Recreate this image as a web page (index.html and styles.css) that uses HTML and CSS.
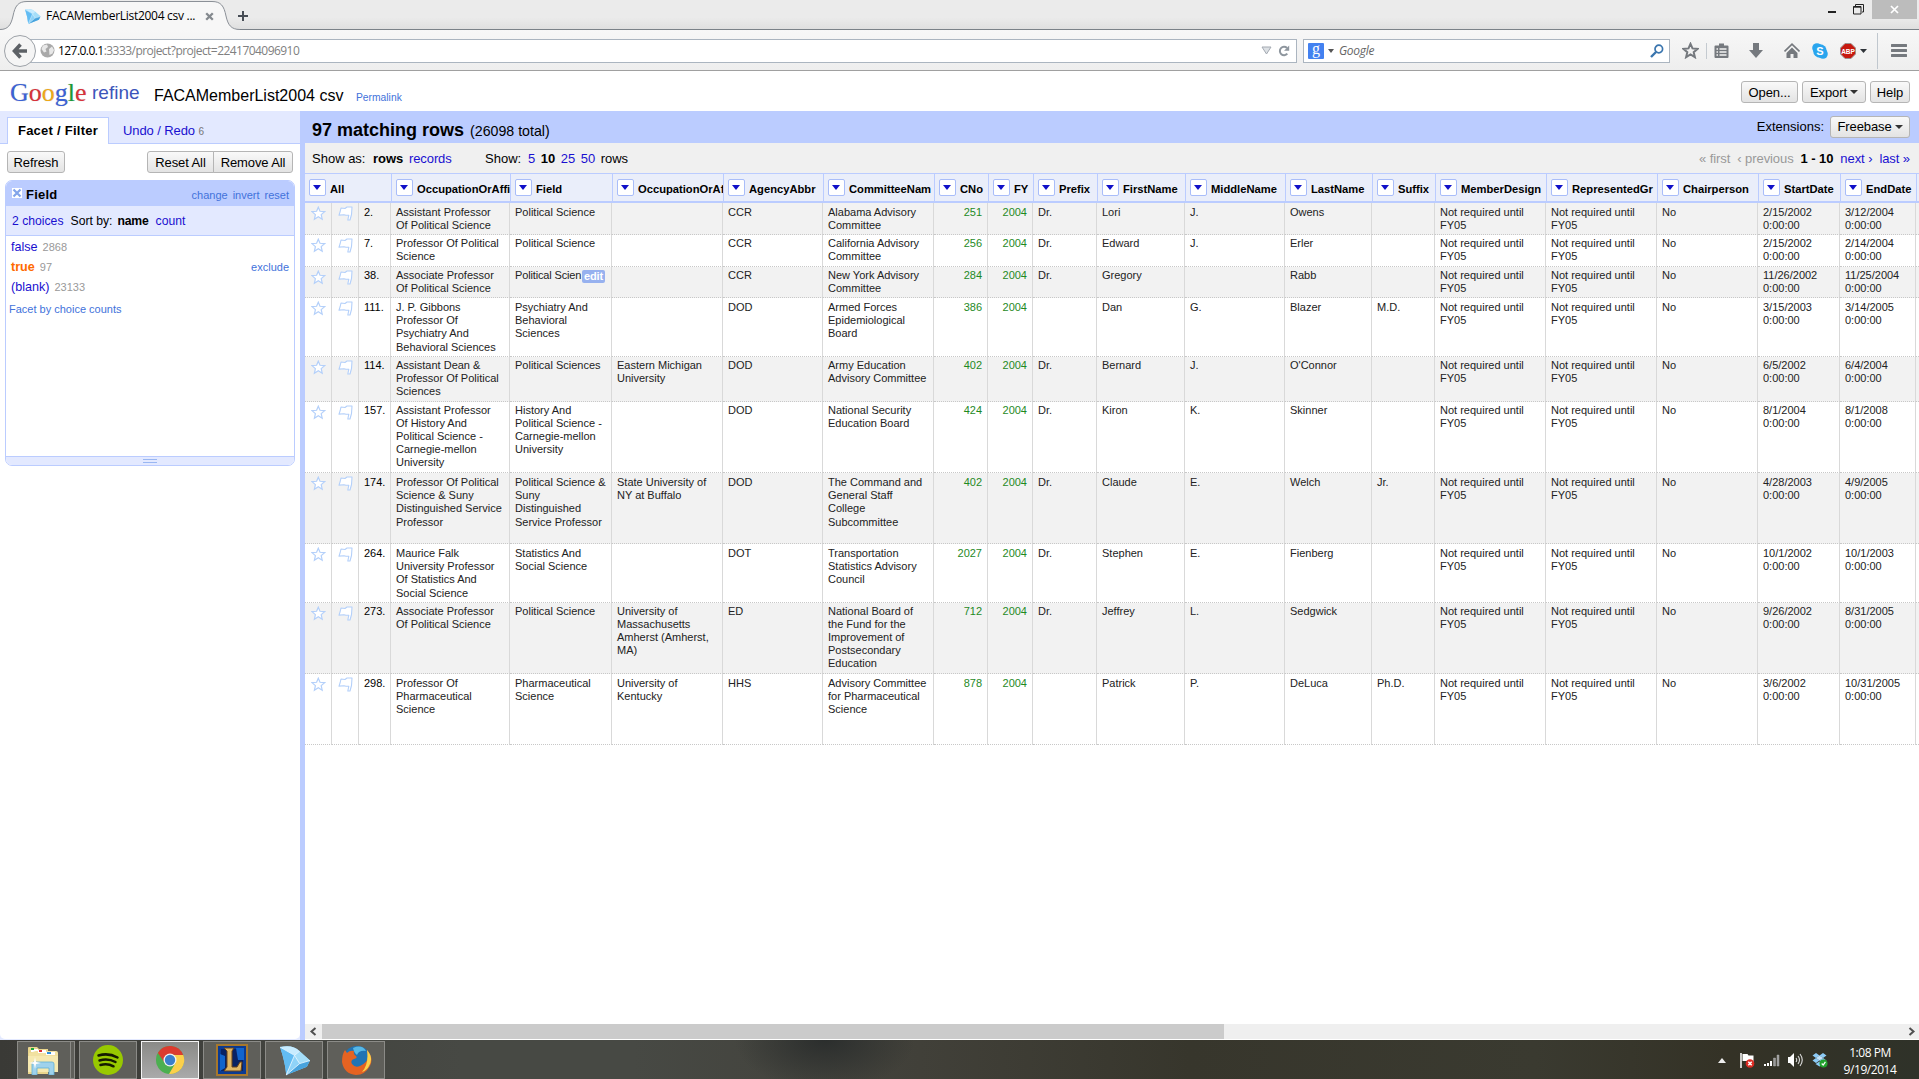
FILE: index.html
```html
<!DOCTYPE html>
<html lang="en">
<head>
<meta charset="utf-8">
<title>FACAMemberList2004 csv - Google Refine</title>
<link rel="stylesheet" href="styles.css">
</head>
<body>
<svg class="defs" width="0" height="0">
  <defs>
    <symbol id="star" viewBox="0 0 15 15"><path d="M7.3 1.2 9 5.3l4.6.3-3.4 3 1 4.6-3.9-2.4-3.9 2.4 1-4.6-3.4-3L5.6 5.3z" fill="#fff" stroke="#b4d0fa" stroke-width="1.2"/></symbol>
    <symbol id="flag" viewBox="0 0 15 15"><path d="M2.200 5.500 3 2l4 .5L9 1h5l-.5 7.500L12 14H9.800l1-4.700H8L6 8.800l-5 .3z" fill="#fff" stroke="#b4d0fa" stroke-width="1.1" stroke-linejoin="round"/></symbol>
    <symbol id="diamond" viewBox="0 0 32 30"><path d="M2 2Q14-1 21 6l10 9-3 6-20 8Q7 17 2 2z" fill="#8fd3f8"/><path d="M2 2Q14-1 21 6l-5 4z" fill="#c8ecff"/><path d="m2 2 14 8-8 19Q7 17 2 2z" fill="#62bcf3"/><path d="m21 6 10 9-10 3-5-8z" fill="#a5def9"/><path d="m8 29 13-11 10-3-3 6z" fill="#48a3dd"/><path d="m2 2 14 8 5-4m-5 4 5 8 10-3M8 29l8-19M8 29l13-11" fill="none" stroke="#eaf8ff" stroke-width=".8"/></symbol>
  </defs>
</svg>

<div class="tabstrip">
  <div class="browser-tab">
    <svg class="tab-shape" width="240" height="30" viewBox="0 0 240 30"><path d="M0 30V29.500C8 29.500 11 25 13 16C15 6 18 1.500 27 1.500H212C221 1.500 224 6 226 16C228 25 231 29.500 240 29.500V30z" fill="#f7f7f7"/><path d="M0 29.500C8 29.500 11 25 13 16C15 6 18 1.500 27 1.500H212C221 1.500 224 6 226 16C228 25 231 29.500 240 29.500" fill="none" stroke="#8b9097"/></svg>
    <svg class="tab-icon" width="17" height="17"><use href="#diamond"/></svg>
    <span class="tab-title">FACAMemberList2004 csv ...</span>
    <svg class="tab-close" width="9" height="9" viewBox="0 0 9 9"><path d="m1.200 1.200 6.600 6.600m0-6.600L1.200 7.800" stroke="#84898e" stroke-width="2.300"/></svg>
  </div>
  <svg class="new-tab" width="10" height="10" viewBox="0 0 10 10"><path d="M5 0v10M0 5h10" stroke="#474d55" stroke-width="2"/></svg>
  <div class="window-buttons">
    <svg class="win-min" width="8" height="11" viewBox="0 0 8 11"><path d="M0 10h8" stroke="#222" stroke-width="2"/></svg>
    <svg class="win-restore" width="11" height="11" viewBox="0 0 11 11"><path d="M2.500 3V.500h8v7.500H9M.500 2.500h7.500v7.500H.500z" fill="none" stroke="#222"/><path d="M0 3.200h8" stroke="#222"/></svg>
    <div class="win-close"><svg width="9" height="9" viewBox="0 0 9 9"><path d="m1 1 7 7m0-7L1 8" stroke="#fff" stroke-width="1.700"/></svg></div>
  </div>
</div>

<div class="navbar">
  <div class="url-wrap">
    <div class="back"><svg width="16" height="16" viewBox="0 0 16 16"><path d="M8.500 1.500 2.500 8l6 6.500M2.500 8H15" fill="none" stroke="#5d6166" stroke-width="3.600"/></svg></div>
    <div class="urlbar">
      <svg class="globe" width="15" height="15" viewBox="0 0 15 15"><circle cx="7.500" cy="7.500" r="7" fill="#a9a9a9"/><path d="M3 2.500 7 1.500 8 4 5.500 6 6.500 8.500 4 9.500 1.500 6zM9 6l3-2.500 2 3.500-1.500 3.500L9.500 12z" fill="#e8e8e8"/></svg>
      <span class="url"><b>127.0.0.1</b>:3333/project?project=2241704096910</span>
      <svg class="drop" width="11" height="9" viewBox="0 0 11 9"><path d="M1 1h9L5.500 8z" fill="#dde1e5" stroke="#a4aab2"/></svg>
      <svg class="reload" width="12" height="12" viewBox="0 0 12 12"><path d="M9.300 8.700A4.200 4.200 0 1 1 9 3" fill="none" stroke="#8e969e" stroke-width="2"/><path d="M11.200.500v5.200H6z" fill="#8e969e"/></svg>
    </div>
  </div>
  <div class="searchbar">
    <div class="engine">g</div>
    <svg class="engine-arrow" width="6" height="4" viewBox="0 0 6 4"><path d="M0 0h6L3 4z" fill="#555"/></svg>
    <span class="placeholder">Google</span>
    <svg width="14" height="14" viewBox="0 0 14 14"><circle cx="8.800" cy="5" r="3.800" fill="none" stroke="#3a75ae" stroke-width="1.700"/><path d="M6 8 1 13" stroke="#3a75ae" stroke-width="2.400"/></svg>
  </div>
  <div class="tools">
    <svg class="t-star" width="17" height="17" viewBox="0 0 17 17"><path d="m8.500 1.800 2 4.600 5 .5-3.800 3.300 1.200 5-4.400-2.700-4.400 2.700 1.200-5L1.500 6.900l5-.5z" fill="none" stroke="#75797e" stroke-width="2"/></svg>
    <i class="t-line"></i>
    <svg class="t-clip" width="15" height="15" viewBox="0 0 15 15"><path d="M5 2.500V.500h5v2h3.500q1 0 1 1V14q0 1-1 1h-12q-1 0-1-1V3.500q0-1 1-1z" fill="#75797e"/><path d="M2.500 6H4m1.500 0h7m-10 3H4m1.500 0h7m-10 3H4m1.500 0h7" stroke="#f3f3f3" stroke-width="1.500"/></svg>
    <svg class="t-down" width="14" height="15" viewBox="0 0 14 15"><path d="M4 0h6v7h4l-7 8-7-8h4z" fill="#75797e"/></svg>
    <svg class="t-home" width="16" height="15" viewBox="0 0 16 15"><path d="M8 4.500 13.500 10v5H9.500v-4h-3v4h-4v-5z" fill="#75797e"/><path d="m.500 8.500 7.500-7.300 7.500 7.300" fill="none" stroke="#75797e" stroke-width="1.700"/></svg>
    <svg class="t-skype" width="16" height="16" viewBox="0 0 16 16"><circle cx="5" cy="5" r="4.800" fill="#2aa5ee"/><circle cx="11" cy="11" r="4.800" fill="#2aa5ee"/><circle cx="8" cy="8" r="6.800" fill="#2aa5ee"/><text x="8" y="12" text-anchor="middle" class="skype-s">S</text></svg>
    <svg class="t-abp" width="16" height="16" viewBox="0 0 16 16"><path d="M5 .500h6L15.500 5v6L11 15.500H5L.500 11V5z" fill="#c7190f" stroke="#9c8f8d"/><text x="8" y="10.700" text-anchor="middle" class="abp-t">ABP</text></svg>
    <svg class="t-arrow" width="7" height="4" viewBox="0 0 7 4"><path d="M0 0h7L3.500 4z" fill="#2e3338"/></svg>
    <i class="t-div"></i>
    <svg class="t-menu" width="16" height="13" viewBox="0 0 16 13"><path d="M1 1.500h14M1 6.500h14M1 11.500h14" stroke="#75797e" stroke-width="3" stroke-linecap="round"/></svg>
  </div>
</div>

<header class="app-header">
  <div class="logo"><span class="goog"><i class="gb">G</i><i class="gr">o</i><i class="gy">o</i><i class="gb">g</i><i class="gg">l</i><i class="gr">e</i></span><span class="refine">refine</span></div>
  <span class="project">FACAMemberList2004 csv</span>
  <a class="permalink">Permalink</a>
  <div class="app-actions"><span class="button open">Open...</span><span class="button export">Export<i class="caret"></i></span><span class="button help">Help</span></div>
</header>

<main class="body">
  <aside class="left">
    <div class="left-tabs"><span class="ltab active">Facet / Filter</span><a class="ltab-link">Undo / Redo <small>6</small></a></div>
    <div class="left-body">
      <div class="facet-buttons"><span class="button refresh">Refresh</span><span class="button reset-all">Reset All</span><span class="button remove-all">Remove All</span></div>
      <section class="facet">
        <div class="facet-title"><svg width="10" height="10" viewBox="0 0 10 10"><path d="M0 0h10v10H0z" fill="#fff"/><path d="m1.500 1.500 7 7m0-7-7 7" stroke="#82a4ea" stroke-width="2.200"/></svg><b>Field</b><a>change</a><a>invert</a><a>reset</a></div>
        <div class="facet-controls"><a>2 choices</a><span>Sort by:</span><b>name</b><a>count</a></div>
        <div class="facet-list">
          <div class="choice"><a>false</a><em>2868</em></div>
          <div class="choice"><b>true</b><em>97</em><a class="exclude">exclude</a></div>
          <div class="choice"><a>(blank)</a><em>23133</em></div>
          <a class="by-count">Facet by choice counts</a>
        </div>
        <div class="facet-grip"><i></i></div>
      </section>
    </div>
  </aside>

  <section class="right">
    <div class="summary"><b>97 matching rows</b><span class="total">(26098 total)</span><span class="ext">Extensions:</span><span class="button freebase">Freebase<i class="caret"></i></span></div>
    <div class="view">
      <span class="v-as">Show as:</span><b class="v-rows">rows</b><a class="v-rec">records</a><span class="v-show">Show:</span><a class="v-n">5</a><b class="v-n">10</b><a class="v-n">25</a><a class="v-n">50</a><span>rows</span>
      <div class="pager"><span class="off">« first</span><span class="off">‹ previous</span><b>1 - 10</b><a>next ›</a><a>last »</a></div>
    </div>
    <table class="head">
      <colgroup><col class="cAll"><col class="c4"><col class="c5"><col class="c6"><col class="c7"><col class="c8"><col class="c9"><col class="c10"><col class="c11"><col class="c12"><col class="c13"><col class="c14"><col class="c15"><col class="c16"><col class="c17"><col class="c18"><col class="c19"><col class="c20"><col class="c21"></colgroup>
      <tr>
        <th><i class="menu"></i>All<th><i class="menu"></i>OccupationOrAffi<th><i class="menu"></i>Field<th><i class="menu"></i>OccupationOrAf<th><i class="menu"></i>AgencyAbbr<th><i class="menu"></i>CommitteeNam<th><i class="menu"></i>CNo<th><i class="menu"></i>FY<th><i class="menu"></i>Prefix<th><i class="menu"></i>FirstName<th><i class="menu"></i>MiddleName<th><i class="menu"></i>LastName<th><i class="menu"></i>Suffix<th><i class="menu"></i>MemberDesign<th><i class="menu"></i>RepresentedGr<th><i class="menu"></i>Chairperson<th><i class="menu"></i>StartDate<th><i class="menu"></i>EndDate<th>
    </table>
    <table class="data">
      <colgroup><col class="c1"><col class="c2"><col class="c3"><col class="c4"><col class="c5"><col class="c6"><col class="c7"><col class="c8"><col class="c9"><col class="c10"><col class="c11"><col class="c12"><col class="c13"><col class="c14"><col class="c15"><col class="c16"><col class="c17"><col class="c18"><col class="c19"><col class="c20"><col class="c21"></colgroup>
      <tr class="odd h32 low"><td><svg><use href="#star"/></svg><td><svg><use href="#flag"/></svg><td class="idx">2.<td>Assistant Professor<br>Of Political Science<td>Political Science<td><td>CCR<td>Alabama Advisory<br>Committee<td class="num">251<td class="num">2004<td>Dr.<td>Lori<td>J.<td>Owens<td><td>Not required until<br>FY05<td>Not required until<br>FY05<td>No<td>2/15/2002<br>0:00:00<td>3/12/2004<br>0:00:00<td>
      <tr class="h32"><td><svg><use href="#star"/></svg><td><svg><use href="#flag"/></svg><td class="idx">7.<td>Professor Of Political<br>Science<td>Political Science<td><td>CCR<td>California Advisory<br>Committee<td class="num">256<td class="num">2004<td>Dr.<td>Edward<td>J.<td>Erler<td><td>Not required until<br>FY05<td>Not required until<br>FY05<td>No<td>2/15/2002<br>0:00:00<td>2/14/2004<br>0:00:00<td>
      <tr class="odd h31"><td><svg><use href="#star"/></svg><td><svg><use href="#flag"/></svg><td class="idx">38.<td>Associate Professor<br>Of Political Science<td><div class="editing">Political Scien<a class="edit">edit</a></div><td><td>CCR<td>New York Advisory<br>Committee<td class="num">284<td class="num">2004<td>Dr.<td>Gregory<td><td>Rabb<td><td>Not required until<br>FY05<td>Not required until<br>FY05<td>No<td>11/26/2002<br>0:00:00<td>11/25/2004<br>0:00:00<td>
      <tr class="h59 low"><td><svg><use href="#star"/></svg><td><svg><use href="#flag"/></svg><td class="idx">111.<td>J. P. Gibbons<br>Professor Of<br>Psychiatry And<br>Behavioral Sciences<td>Psychiatry And<br>Behavioral<br>Sciences<td><td>DOD<td>Armed Forces<br>Epidemiological<br>Board<td class="num">386<td class="num">2004<td><td>Dan<td>G.<td>Blazer<td>M.D.<td>Not required until<br>FY05<td>Not required until<br>FY05<td>No<td>3/15/2003<br>0:00:00<td>3/14/2005<br>0:00:00<td>
      <tr class="odd h45"><td><svg><use href="#star"/></svg><td><svg><use href="#flag"/></svg><td class="idx">114.<td>Assistant Dean &amp;<br>Professor Of Political<br>Sciences<td>Political Sciences<td>Eastern Michigan<br>University<td>DOD<td>Army Education<br>Advisory Committee<td class="num">402<td class="num">2004<td>Dr.<td>Bernard<td>J.<td>O'Connor<td><td>Not required until<br>FY05<td>Not required until<br>FY05<td>No<td>6/5/2002<br>0:00:00<td>6/4/2004<br>0:00:00<td>
      <tr class="h71"><td><svg><use href="#star"/></svg><td><svg><use href="#flag"/></svg><td class="idx">157.<td>Assistant Professor<br>Of History And<br>Political Science -<br>Carnegie-mellon<br>University<td>History And<br>Political Science -<br>Carnegie-mellon<br>University<td><td>DOD<td>National Security<br>Education Board<td class="num">424<td class="num">2004<td>Dr.<td>Kiron<td>K.<td>Skinner<td><td>Not required until<br>FY05<td>Not required until<br>FY05<td>No<td>8/1/2004<br>0:00:00<td>8/1/2008<br>0:00:00<td>
      <tr class="odd h71 low"><td><svg><use href="#star"/></svg><td><svg><use href="#flag"/></svg><td class="idx">174.<td>Professor Of Political<br>Science &amp; Suny<br>Distinguished Service<br>Professor<td>Political Science &amp;<br>Suny<br>Distinguished<br>Service Professor<td>State University of<br>NY at Buffalo<td>DOD<td>The Command and<br>General Staff<br>College<br>Subcommittee<td class="num">402<td class="num">2004<td>Dr.<td>Claude<td>E.<td>Welch<td>Jr.<td>Not required until<br>FY05<td>Not required until<br>FY05<td>No<td>4/28/2003<br>0:00:00<td>4/9/2005<br>0:00:00<td>
      <tr class="h59 low"><td><svg><use href="#star"/></svg><td><svg><use href="#flag"/></svg><td class="idx">264.<td>Maurice Falk<br>University Professor<br>Of Statistics And<br>Social Science<td>Statistics And<br>Social Science<td><td>DOT<td>Transportation<br>Statistics Advisory<br>Council<td class="num">2027<td class="num">2004<td>Dr.<td>Stephen<td>E.<td>Fienberg<td><td>Not required until<br>FY05<td>Not required until<br>FY05<td>No<td>10/1/2002<br>0:00:00<td>10/1/2003<br>0:00:00<td>
      <tr class="odd h71"><td><svg><use href="#star"/></svg><td><svg><use href="#flag"/></svg><td class="idx">273.<td>Associate Professor<br>Of Political Science<td>Political Science<td>University of<br>Massachusetts<br>Amherst (Amherst,<br>MA)<td>ED<td>National Board of<br>the Fund for the<br>Improvement of<br>Postsecondary<br>Education<td class="num">712<td class="num">2004<td>Dr.<td>Jeffrey<td>L.<td>Sedgwick<td><td>Not required until<br>FY05<td>Not required until<br>FY05<td>No<td>9/26/2002<br>0:00:00<td>8/31/2005<br>0:00:00<td>
      <tr class="h71 low"><td><svg><use href="#star"/></svg><td><svg><use href="#flag"/></svg><td class="idx">298.<td>Professor Of<br>Pharmaceutical<br>Science<td>Pharmaceutical<br>Science<td>University of<br>Kentucky<td>HHS<td>Advisory Committee<br>for Pharmaceutical<br>Science<td class="num">878<td class="num">2004<td><td>Patrick<td>P.<td>DeLuca<td>Ph.D.<td>Not required until<br>FY05<td>Not required until<br>FY05<td>No<td>3/6/2002<br>0:00:00<td>10/31/2005<br>0:00:00<td>
    </table>
    <div class="hscroll">
      <svg width="17" height="15" viewBox="0 0 17 15"><path d="m10.500 4-4 3.500 4 3.500" fill="none" stroke="#505050" stroke-width="2"/></svg>
      <i class="thumb"></i>
      <svg class="sc-right" width="17" height="15" viewBox="0 0 17 15"><path d="m7.500 4 4 3.500-4 3.500" fill="none" stroke="#505050" stroke-width="2"/></svg>
    </div>
  </section>
</main>

<footer class="taskbar">
  <div class="task first"><svg width="34" height="30" viewBox="0 0 34 30"><path d="M2 3q0-1 1-1h8l2 2h9v25H2z" fill="#e9d58c"/><path d="M5 4h7v3H5z" fill="#fff"/><path d="M5 3h3v2H5z" fill="#1fa83a"/><path d="M10 6h20q2 0 2 2v19H3V8z" fill="#f1e1a0"/><path d="M12 5h8v3h-8z" fill="#fff"/><path d="M13 5h3v2h-3z" fill="#d33"/><path d="M20 7h9v3h-9z" fill="#fff"/><path d="M21 7h4v2h-4z" fill="#2b8fdc"/><path d="M2 11h30v16H2z" fill="#f6e9b0"/><path d="M6 30V19q0-2 2-2h18q2 0 2 2v11h-5v-7H11v7z" fill="#9fd2ec" stroke="#5faed6" stroke-width=".8"/><path d="m9 12 1 5 5 1-5 1-1 5-1-5-5-1 5-1z" fill="#fff"/></svg></div><i class="stack"></i>
  <div class="task"><svg width="30" height="30" viewBox="0 0 30 30"><circle cx="15" cy="15" r="15" fill="#98c900"/><path d="M5.500 10.500q10-3 19 2M6.500 15.500q8.500-2.500 16 1.500M7.500 20q7-2 13 1.300" fill="none" stroke="#151b00" stroke-width="2.500" stroke-linecap="round"/></svg></div>
  <div class="task current"><svg width="30" height="30" viewBox="0 0 30 30"><circle cx="15" cy="15" r="14" fill="#4caf50"/><path d="M2.900 8A14 14 0 0 1 28.300 10.500L15 9.500l-5.500 8z" fill="#dc3b2f"/><path d="M28.300 10A14 14 0 0 1 14 29l6.500-11L17 10z" fill="#fcd04b"/><circle cx="15" cy="15" r="6.500" fill="#f2f2f2"/><circle cx="15" cy="15" r="5.200" fill="#3b7fcb"/></svg></div>
  <div class="task"><svg width="32" height="32" viewBox="0 0 32 32"><path d="M1 1h30v30H1z" fill="#0b3a92" stroke="#a7782c" stroke-width="2"/><path d="M5 5h22v22H5z" fill="#0a2263"/><path d="M20 4h8v12h-6zM4 10l5 2v12l-5 3z" fill="#1264cc"/><path d="M8 4h10l-2 3v16h5l3-5h2l-1 9H8l3-4V7z" fill="#e2b765" stroke="#69431a"/></svg></div>
  <div class="task"><svg width="33" height="31"><use href="#diamond"/></svg></div>
  <div class="task"><svg width="31" height="31" viewBox="0 0 31 31"><circle cx="16" cy="15" r="14" fill="#2174b4"/><path d="M12 3q9-4 13 3-7-1-9 4-3-2-4-7z" fill="#57b8e6"/><path d="M26 5q7 8 3 16-5 9-14 9-12-1-14-13Q1 9 4 5l2 3q3-3 7-2-1 3 2 5 2 2-2 3-4 1-2 5 3 4 8 2 7-3 8-9 0-4-1-7z" fill="#e56322"/><path d="M26 5q7 8 2 16-2 4-7 6 7-8 5-22z" fill="#fcd24a"/></svg></div>
  <div class="tray">
    <svg class="up" width="8" height="5" viewBox="0 0 8 5"><path d="M0 5h8L4 0z" fill="#eee"/></svg>
    <svg class="tflag" width="15" height="15" viewBox="0 0 15 15"><path d="M1 0v15" stroke="#fff" stroke-width="1.500"/><path d="M2.500 1h5l1 1.500h5V9h-5l-1-1h-5z" fill="#fff"/><circle cx="10" cy="10.500" r="4.300" fill="#dc2b23"/><path d="m8.300 8.800 3.400 3.400m0-3.400-3.400 3.400" stroke="#fff" stroke-width="1.500"/></svg>
    <svg class="signal" width="16" height="13" viewBox="0 0 16 13"><path d="M0 10h2v2H0zm3-1h2v3H3zm3-2h2v5H6z" fill="#fff"/><path d="M9.500 4h2v8h-2zm3.500-3h2v11h-2z" fill="#999" stroke="#bbb" stroke-width=".4"/></svg>
    <svg class="sound" width="16" height="14" viewBox="0 0 16 14"><path d="M1 4h2l4-4v14l-4-4H1z" fill="#fff"/><path d="M9 5q1.500 2 0 4m2-6q3 4 0 8m2-10q4.500 6 0 12" fill="none" stroke="#ddd" stroke-width="1.100"/></svg>
    <svg class="box" width="16" height="15" viewBox="0 0 16 15"><path d="M4 0l3.500 2.500L4 5 .500 2.500zm7 0 3.500 2.500L11 5 7.500 2.500zM4 5l3.500 2.500L4 10 .500 7.500zm7 0 3.500 2.500L11 10 7.500 7.500zM3.500 11l4-2.500 4 2.500-4 2.500z" fill="#8ccbf7"/><path d="M4 0l3.500 2.500L11 5 7.500 7.500 4 5 7.500 2.500z" fill="#c4e6ff"/><circle cx="11.500" cy="10.500" r="4" fill="#22a32d"/><path d="m9.700 10.500 1.500 1.600 2.200-3.300" fill="none" stroke="#fff" stroke-width="1.200"/></svg>
    <div class="clock">1:08 PM<br>9/19/2014</div>
  </div>
</footer>
</body>
</html>
```
FILE: styles.css
```css
* { box-sizing: border-box; }
html, body { margin: 0; height: 100%; overflow: hidden; }
body { display: flex; flex-direction: column; background: #fff; color: #000; font: 13px/16px "Liberation Sans", Arial, sans-serif; white-space: nowrap; }
i, em { font-style: normal; }
svg { display: block; flex: none; }
.defs { position: absolute; }
a { color: #1a10d0; }

/* Browser chrome */
.tabstrip { flex: none; height: 30px; display: flex; align-items: flex-start; background: linear-gradient(#ebebeb 60%, #dfdfdf); border-bottom: 1px solid #7a8188; }
.browser-tab { position: relative; width: 240px; height: 30px; display: flex; align-items: center; padding: 2px 0 0 24px; }
.tab-shape { position: absolute; left: 0; top: 0; }
.tab-icon { position: relative; }
.tab-title { position: relative; width: 154px; margin-left: 5px; font: 12px/16px "Open Sans", sans-serif; letter-spacing: -.28px; }
.tab-close { position: relative; margin-left: 5px; }
.new-tab { margin: 11px 0 0 -2px; }
.window-buttons { margin-left: auto; display: flex; padding-right: 2px; }
.win-min { margin: 2px 17px 0 0; }
.win-restore { margin: 4px 8px 0 0; }
.win-close { width: 45px; height: 19px; background: #bcbcbc; display: flex; align-items: center; justify-content: center; }
.navbar { flex: none; height: 41px; display: flex; align-items: center; padding-top: 1px; background: linear-gradient(#f7f7f7, #eee); border-bottom: 1px solid #a0a0a0; font: 12px/16px "Open Sans", sans-serif; }
.url-wrap { display: flex; align-items: center; width: 1297px; padding-left: 4px; }
.back { z-index: 1; width: 32px; height: 32px; border: 1px solid #9da2a8; border-radius: 50%; background: #f5f5f5; display: flex; align-items: center; justify-content: center; }
.urlbar { flex: 1; height: 24px; margin-left: -6px; padding: 0 6px 0 9px; display: flex; align-items: center; background: #fff; border: 1px solid #abb5c0; }
.url { flex: 1; margin-left: 3px; color: #808080; letter-spacing: -.55px; }
.url b { font-weight: normal; color: #000; }
.drop { margin-right: 6px; }
.searchbar { width: 367px; height: 24px; margin-left: 6px; padding: 0 5px 0 4px; display: flex; align-items: center; background: #fff; border: 1px solid #abb5c0; }
.engine { width: 16px; height: 16px; border-radius: 1px; background: #4381f0; color: #fff; font: 16px/12px "Liberation Serif", serif; text-align: center; }
.engine-arrow { margin-left: 4px; }
.placeholder { flex: 1; margin-left: 5px; font-style: italic; color: #666; letter-spacing: -.3px; }
.tools { display: flex; align-items: center; }
.t-star { margin-left: 12px; }
.t-line { width: 1px; height: 16px; margin-left: 7px; background: #c4cad0; }
.t-clip { margin-left: 7px; }
.t-down { margin-left: 20px; }
.t-home { margin-left: 21px; }
.t-skype { margin-left: 12px; }
.t-abp { margin-left: 12px; }
.t-arrow { margin-left: 4px; }
.t-div { width: 1px; height: 36px; margin-left: 10px; background: #c0c7ce; }
.t-menu { margin-left: 13px; }
.skype-s { font: bold 11px "Liberation Sans", sans-serif; fill: #fff; }
.abp-t { font: bold 6.500px "Liberation Sans", sans-serif; fill: #fff; }

/* Application header */
.app-header { flex: none; height: 40px; display: flex; padding-left: 10px; }
.logo { width: 144px; display: flex; }
.goog { font: 26px/30px "Liberation Serif", serif; margin-top: 7px; width: 82px; text-shadow: 0 0 1px #bbb; }
.gb { color: #3b62d6; } .gr { color: #d8323a; } .gy { color: #f0a818; } .gg { color: #199a39; }
.refine { font-size: 19px; line-height: 22px; margin-top: 11px; color: #3c55ba; }
.project { width: 202px; font-size: 16px; line-height: 20px; margin-top: 15px; }
.permalink { font-size: 10.300px; margin-top: 18.500px; color: #4272db; }
.app-actions { margin: 10px 9px 0 auto; display: flex; gap: 4px; }
.button { height: 22px; border: 1px solid #b5b5b5; border-radius: 3px; background: linear-gradient(#f9f9f9, #e3e3e3); line-height: 21px; display: flex; align-items: center; justify-content: center; letter-spacing: -.1px; }
.open { width: 57px; } .export { width: 64px; } .help { width: 40px; } .freebase { width: 80px; }
.caret { margin-left: 3px; border: 4px solid transparent; border-top-color: #333; border-bottom: 0; }

/* Facet panel */
.body { flex: none; height: 969px; display: flex; height: 929px; }
.left { width: 305px; border-right: 5px solid #bbccff; background: #e3e9ff; }
.left-tabs { height: 33px; display: flex; padding: 6px 0 0 7px; border-bottom: 1px solid #bbccff; }
.ltab { width: 102px; height: 27px; border: 1px solid #bbccff; border-bottom: 0; background: #fff; font-weight: bold; text-align: center; line-height: 26px; letter-spacing: .25px; }
.ltab-link { margin-left: 14px; line-height: 27px; letter-spacing: -.1px; }
.ltab-link small { font-size: 10px; color: #777; }
.left-body { height: 895px; background: #fff; border-radius: 0 0 5px 5px; padding: 7px 5px 0; }
.facet-buttons { display: flex; padding: 0 2px; }
.refresh { width: 58px; }
.reset-all { width: 67px; margin-left: auto; border-radius: 3px 0 0 3px; }
.remove-all { width: 80px; margin-left: -1px; border-radius: 0 3px 3px 0; }
.facet { margin-top: 7px; height: 286px; border: 1px solid #bbccff; border-radius: 7px; overflow: hidden; display: flex; flex-direction: column; }
.facet-title { height: 25px; display: flex; align-items: center; padding: 3px 5px 0 6px; background: #bbccff; }
.facet-title svg { margin-top: -5px; }
.facet-title b { margin: 0 auto 0 4px; letter-spacing: .2px; }
.facet-title a { margin-left: 5px; font-size: 11px; color: #4272db; }
.facet-controls { height: 30px; display: flex; align-items: center; gap: 7px; padding-left: 6px; background: #e3e9ff; border-bottom: 1px solid #bbccff; font-size: 12.200px; }
.facet-controls b { margin-left: -2px; letter-spacing: -.2px; }
.facet-list { flex: 1; padding-top: 1px; }
.choice { height: 20px; display: flex; align-items: center; padding: 0 5px; font-size: 12.600px; }
.choice b { color: #ff6a00; }
.choice em { margin-left: 5px; font-size: 11px; color: #999; }
.exclude { margin-left: auto; }
.exclude, .by-count { font-size: 11px; color: #4272db; }
.by-count { display: block; margin: 4px 0 0 3px; }
.facet-grip { height: 9px; background: #e3e9ff; border-top: 1px solid #bbccff; padding-top: 2px; }
.facet-grip i { display: block; width: 14px; height: 4px; margin: auto; border: solid #9ab7f2; border-width: 1px 0; }

/* Grid pane */
.right { width: 1614px; display: flex; flex-direction: column; overflow: hidden; }
.summary { flex: none; height: 32px; display: flex; align-items: center; padding: 0 9px 0 7px; background: #bbccff; }
.summary b { font-size: 18px; line-height: 22px; margin-top: 5px; }
.total { margin: 8px auto 0 6px; font-size: 14.200px; }
.ext { margin-right: 6px; }
.freebase { margin-top: -1px; }
.view { flex: none; height: 30px; display: flex; align-items: center; padding: 1px 9px 0 7px; background: #f0f0f0; }
.v-as { width: 61px; } .v-rows { width: 36px; } .v-rec { width: 76px; letter-spacing: -.1px; } .v-show { width: 43px; } .v-n { margin-right: 5.500px; }
.pager { margin-left: auto; display: flex; gap: 7px; letter-spacing: -.08px; }
.off { color: #999; }

table { table-layout: fixed; border-collapse: separate; border-spacing: 0; width: 1614px; flex: none; }
.head { width: 1615px; }
.cAll { width: 87px; } .c1, .c2 { width: 27px; } .c3 { width: 32px; } .c4 { width: 119px; } .c5 { width: 102px; }
.c6 { width: 111px; } .c7 { width: 100px; } .c8 { width: 111px; } .c9 { width: 54px; } .c10 { width: 45px; }
.c11 { width: 64px; } .c12 { width: 88px; } .c13 { width: 100px; } .c14 { width: 87px; } .c15 { width: 63px; }
.c16, .c17 { width: 111px; } .c18 { width: 101px; } .c19 { width: 82px; } .c20 { width: 76px; } .c21 { width: 3px; }
th { height: 30px; padding: 4px 0 0 4px; overflow: hidden; text-align: left; vertical-align: top; font-size: 11.200px; line-height: 23px; background: #eaeefa; border: solid #bbccff; border-width: 1px 1px 2px 0; }
th:last-child, td:last-child { padding: 0; border-right: 0; }
.menu { float: left; width: 17px; height: 17px; margin: 1px 4px 0 0; border: 1px solid #a9bdf9; border-radius: 2px; background: #fff; padding: 5px 0 0 3px; }
.menu::before { content: ""; display: block; width: 0; border: 4.500px solid transparent; border-top: 5px solid #1010c8; border-bottom: 0; }
td { height: 32px; padding: 1.500px 0 0 5px; vertical-align: top; font-size: 11px; line-height: 13.200px; color: #222; border-right: 1px solid #d9d9d9; border-bottom: 1px dotted #c8c8c8; }
.odd td { background: #f2f2f2; }
.low td { padding-top: 2.900px; }
.h31 td { height: 31px; } .h45 td { height: 45px; } .h59 td { height: 59px; } .h71 td { height: 71px; }
td svg { width: 15px; height: 15px; margin: 1px 0 0 1px; }
.low svg { margin-top: 0; }
td.idx { color: #000; }
td.num { text-align: right; padding-right: 5px; color: #1f8a1f; }
.editing { position: relative; letter-spacing: -.15px; }
.edit { position: absolute; right: 6px; top: 1px; width: 23px; height: 13px; border-radius: 2px; background: #97b1ef; color: #fff; font-weight: bold; text-align: center; }
.hscroll { flex: none; height: 15px; margin: auto 0 1px; display: flex; background: #efefef; }
.thumb { width: 902px; background: #cbcbcb; }
.sc-right { margin-left: auto; }

/* Taskbar */
.taskbar { flex: 1; display: flex; align-items: stretch; padding: 1px 0 0 17px; background: radial-gradient(ellipse 90px 50px at 825px 0, #2b2e2d, transparent), linear-gradient(90deg, #3a3a36, #474944 24%, #474944 33%, #414039 48%, #37362c 62%, #3a3a30 80%, #343226 90%, #2f3229); }
.task { width: 58px; margin-right: 4px; display: flex; align-items: center; justify-content: center; background: #5f5f5a; border: 1px solid #8b8b87; }
.first { width: 54px; margin: 0; padding-right: 2px; }
.stack { width: 4px; margin-right: 4px; background: #5f5f5a; border: 1px solid #8b8b87; border-left: 0; }
.current { background: linear-gradient(#8a8a87, #aaa); border-color: #f4f4f4; }
.tray { margin-left: auto; display: flex; align-items: center; padding-right: 7px; }
.up { margin-right: 14px; }
.tflag { margin-right: 9px; }
.signal { margin-right: 7px; }
.sound { margin-right: 9px; }
.clock { width: 84px; padding: 2px 0 0 0; text-align: center; color: #fff; font: 12px/17px "Open Sans", sans-serif; letter-spacing: -.45px; }
```
